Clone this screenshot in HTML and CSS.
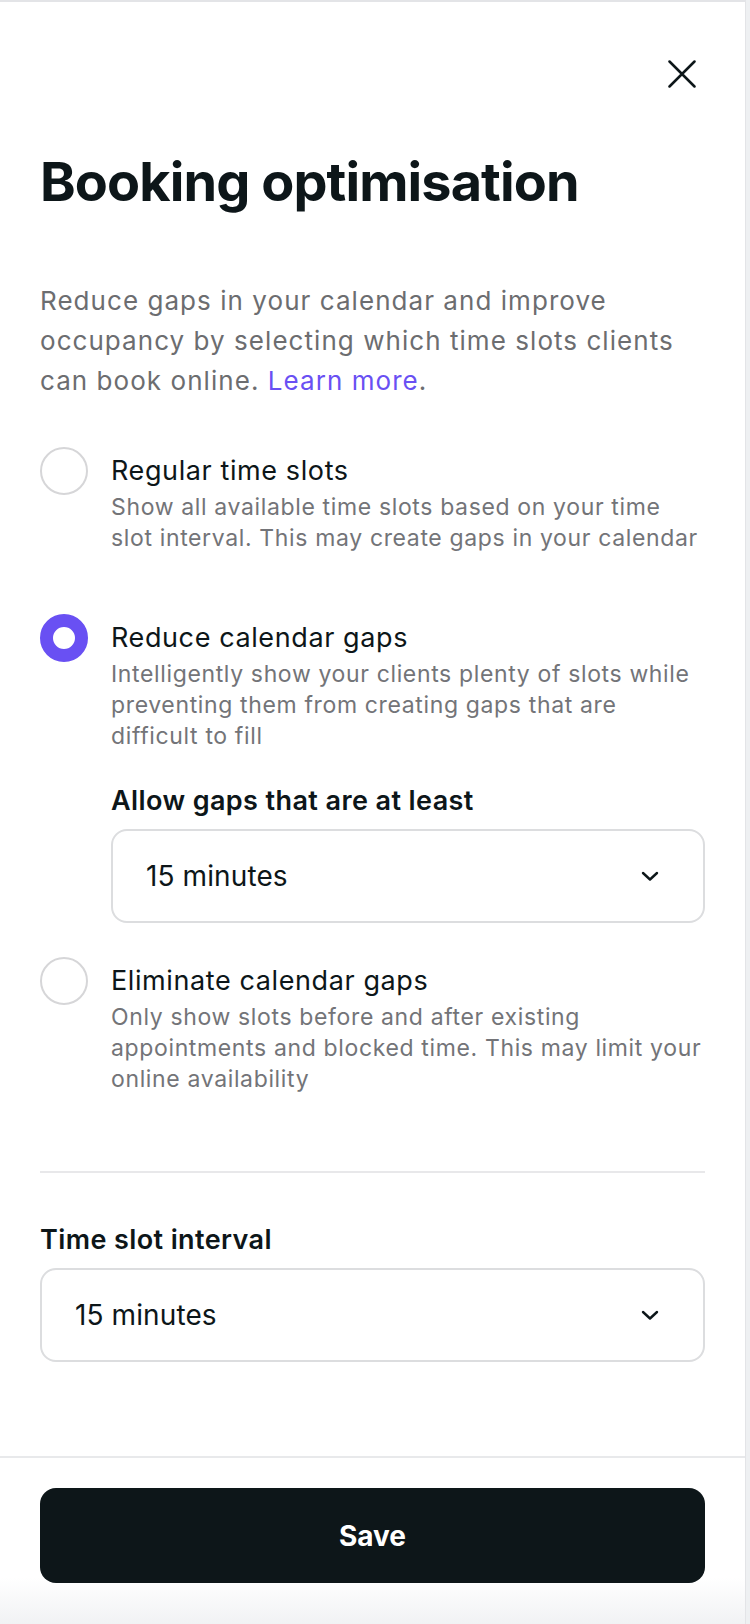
FILE: index.html
```html
<!DOCTYPE html>
<html lang="en">
<head>
<meta charset="utf-8">
<title>Booking optimisation</title>
<link rel="stylesheet" href="styles.css">
</head>
<body>
<div class="panel">
  <main class="main">
    <div class="close-row">
      <button class="close" aria-label="Close">
        <svg width="28" height="28" viewBox="0 0 28 28" fill="none" stroke="#0d1619" stroke-width="2.5" stroke-linecap="round"><path d="M1.5 1.5 L26.5 26.5 M26.5 1.5 L1.5 26.5"/></svg>
      </button>
    </div>
    <h1 class="title">Booking optimisation</h1>
    <p class="intro">Reduce gaps in your calendar and improve occupancy by selecting which time slots clients can book online. <a class="link" href="#">Learn more</a>.</p>

    <div class="options">
      <div class="option">
        <span class="radio"></span>
        <div class="option-text">
          <div class="option-label">Regular time slots</div>
          <div class="option-desc">Show all available time slots based on your time slot interval. This may create gaps in your calendar</div>
        </div>
      </div>

      <div class="option">
        <span class="radio radio-on"></span>
        <div class="option-text">
          <div class="option-label">Reduce calendar gaps</div>
          <div class="option-desc">Intelligently show your clients plenty of slots while preventing them from creating gaps that are difficult to fill</div>
          <div class="field-label sub-label">Allow gaps that are at least</div>
          <div class="select">
            <span>15 minutes</span>
            <svg class="chev" width="20" height="12" viewBox="0 0 20 12" fill="none" stroke="#0d1619" stroke-width="2.4" stroke-linecap="round" stroke-linejoin="round"><path d="M3 3 L10 9.5 L17 3"/></svg>
          </div>
        </div>
      </div>

      <div class="option option-last">
        <span class="radio"></span>
        <div class="option-text">
          <div class="option-label">Eliminate calendar gaps</div>
          <div class="option-desc">Only show slots before and after existing appointments and blocked time. This may limit your online availability</div>
        </div>
      </div>
    </div>

    <hr class="divider">

    <div class="field-label interval-label">Time slot interval</div>
    <div class="select">
      <span>15 minutes</span>
      <svg class="chev" width="20" height="12" viewBox="0 0 20 12" fill="none" stroke="#0d1619" stroke-width="2.4" stroke-linecap="round" stroke-linejoin="round"><path d="M3 3 L10 9.5 L17 3"/></svg>
    </div>
  </main>

  <footer class="footer">
    <button class="save">Save</button>
  </footer>
</div>
</body>
</html>
```

FILE: styles.css
```css
* { box-sizing: border-box; }

html, body {
  margin: 0;
  padding: 0;
}

body {
  background: #eef0f2;
  font-family: Inter, "Noto Sans", sans-serif;
  color: #0d1619;
}

.panel {
  width: 746px;
  min-height: 100vh;
  background: #ffffff;
  border-top: 2px solid #e3e4e7;
  border-right: 1px solid #e3e4e7;
  display: flex;
  flex-direction: column;
}

.main {
  flex: 1;
  padding: 0 40px 0 40px;
}

.close-row {
  display: flex;
  justify-content: flex-end;
  padding-top: 48px;
}

.close {
  width: 48px;
  height: 48px;
  margin-right: -1px;
  border: 0;
  background: transparent;
  padding: 0;
  display: flex;
  align-items: center;
  justify-content: center;
}

.title {
  margin: 52px 0 0;
  font-size: 54px;
  line-height: 64px;
  font-weight: 700;
  letter-spacing: -0.9px;
}

.intro {
  margin: 67px 0 0;
  font-size: 26px;
  line-height: 40px;
  letter-spacing: 1.05px;
  color: #6c6d70;
}

.link {
  color: #6950f3;
  text-decoration: none;
}

.options {
  margin-top: 46px;
  display: flex;
  flex-direction: column;
  gap: 60px;
}

.option {
  display: flex;
  align-items: flex-start;
  gap: 23px;
}

.radio {
  flex: none;
  width: 48px;
  height: 48px;
  border-radius: 50%;
  border: 2px solid #d6d6d8;
  background: #fff;
}

.radio-on {
  border: 13px solid #6950f3;
}

.option-text {
  flex: 1;
  padding-top: 7px;
}

.option-label {
  font-size: 27px;
  line-height: 34px;
  letter-spacing: 0.6px;
}

.option-desc {
  margin-top: 4px;
  font-size: 23px;
  line-height: 31px;
  letter-spacing: 0.64px;
  color: #737478;
}

.field-label {
  font-size: 27px;
  line-height: 34px;
  font-weight: 600;
  letter-spacing: 0.4px;
}

.sub-label {
  margin-top: 32px;
}

.select {
  margin-top: 11px;
  height: 94px;
  border: 2px solid #dcdddf;
  border-radius: 16px;
  padding: 0 43px 0 33px;
  display: flex;
  align-items: center;
  justify-content: space-between;
  font-size: 28px;
  line-height: 34px;
  letter-spacing: 0.1px;
}

.option-last {
  margin-top: -26px;
}

.divider {
  margin: 76px 0 0;
  border: 0;
  height: 2px;
  background: #e8e8ea;
}

.interval-label {
  margin-top: 50px;
}

.footer {
  border-top: 2px solid #e8e9eb;
  padding: 30px 40px 41px;
  background: linear-gradient(to bottom, #ffffff 0, #ffffff 120px, #f1f2f4 100%);
}

.save {
  display: block;
  width: 100%;
  height: 95px;
  border: 0;
  border-radius: 16px;
  background: #0d1619;
  color: #ffffff;
  font-family: Inter, "Noto Sans", sans-serif;
  font-size: 28px;
  font-weight: 700;
}
```
